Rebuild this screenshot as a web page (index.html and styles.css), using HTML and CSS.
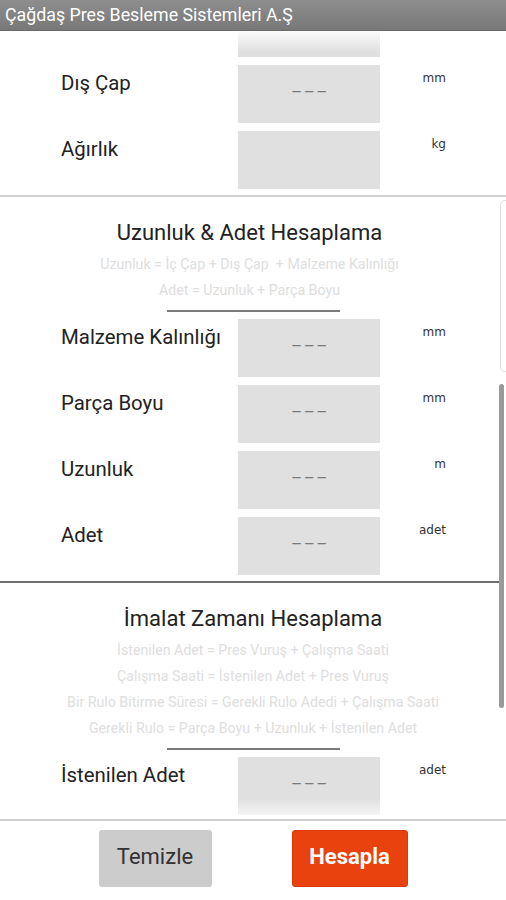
FILE: index.html
```html
<!DOCTYPE html>
<html lang="tr">
<head>
<meta charset="utf-8">
<title>Çağdaş Pres Besleme Sistemleri A.Ş</title>
<link rel="stylesheet" href="styles.css">
</head>
<body>
<div class="app">
  <header class="appbar">Çağdaş Pres Besleme Sistemleri A.Ş</header>
  <main class="scroll">
    <div class="content">
      <section class="sec sec-first">
        <div class="rows">
          <div class="row"><span class="label"></span><div class="field"></div><span class="unit"></span></div>
          <div class="row"><span class="label">Dış Çap</span><div class="field"><span class="dash">–––</span></div><span class="unit">mm</span></div>
          <div class="row"><span class="label">Ağırlık</span><div class="field"></div><span class="unit">kg</span></div>
        </div>
      </section>
      <section class="sec sec-mid">
        <h2 class="sec-title">Uzunluk &amp; Adet Hesaplama</h2>
        <div class="formulas">
          <p>Uzunluk = İç Çap + Dış Çap&nbsp; + Malzeme Kalınlığı</p>
          <p>Adet = Uzunluk + Parça Boyu</p>
        </div>
        <div class="divider"></div>
        <div class="rows">
          <div class="row"><span class="label">Malzeme Kalınlığı</span><div class="field"><span class="dash">–––</span></div><span class="unit">mm</span></div>
          <div class="row"><span class="label">Parça Boyu</span><div class="field"><span class="dash">–––</span></div><span class="unit">mm</span></div>
          <div class="row"><span class="label">Uzunluk</span><div class="field"><span class="dash">–––</span></div><span class="unit">m</span></div>
          <div class="row"><span class="label">Adet</span><div class="field"><span class="dash">–––</span></div><span class="unit">adet</span></div>
        </div>
      </section>
      <section class="sec sec-last">
        <h2 class="sec-title">İmalat Zamanı Hesaplama</h2>
        <div class="formulas">
          <p>İstenilen Adet = Pres Vuruş + Çalışma Saati</p>
          <p>Çalışma Saati = İstenilen Adet + Pres Vuruş</p>
          <p>Bir Rulo Bitirme Süresi = Gerekli Rulo Adedi + Çalışma Saati</p>
          <p>Gerekli Rulo = Parça Boyu + Uzunluk + İstenilen Adet</p>
        </div>
        <div class="divider"></div>
        <div class="rows">
          <div class="row"><span class="label">İstenilen Adet</span><div class="field"><span class="dash">–––</span></div><span class="unit">adet</span></div>
        </div>
      </section>
    </div>
    <div class="fade fade-top"></div>
    <div class="fade fade-bottom"></div>
    <div class="track"></div>
    <div class="thumb"></div>
  </main>
  <footer class="actions">
    <div class="btn btn-clear">Temizle</div>
    <div class="btn btn-calc">Hesapla</div>
  </footer>
</div>
</body>
</html>
```
FILE: styles.css
```css
* { box-sizing: border-box; }
html, body { margin: 0; padding: 0; background: #fff; }
body { font-family: Roboto, "Noto Sans", "Liberation Sans", sans-serif; color: #222; }

.app { width: 506px; height: 900px; display: flex; flex-direction: column; overflow: hidden; }

.appbar {
  height: 31px;
  flex: 0 0 31px;
  background: linear-gradient(#8e8e8e, #787878);
  border-bottom: 1px solid #6a6a6a;
  color: #fff;
  font-size: 17.8px;
  line-height: 30px;
  padding-left: 5px;
  white-space: nowrap;
}

.scroll { position: relative; flex: 1 1 auto; overflow: hidden; }
.content { margin-top: -32px; }

.sec-first { padding-bottom: 6px; border-bottom: 2px solid #d2d2d2; }
.sec-mid { padding-top: 24px; padding-bottom: 6px; border-bottom: 2px solid #6e6e6e; margin-right: 7px; }
.sec-last { padding-top: 24px; }

.sec-title {
  margin: 0;
  text-align: center;
  font-size: 22px;
  font-weight: 400;
  line-height: 24px;
  color: #222;
}
.formulas { margin-top: 6px; text-align: center; }
.formulas p {
  margin: 0;
  font-size: 14.2px;
  line-height: 26px;
  color: #dedede;
  white-space: nowrap;
}
.divider { width: 173px; height: 2px; background: #7a7a7a; margin: 7px 0 0 167px; }

.rows { display: flex; flex-direction: column; gap: 8px; margin-top: 7px; }
.sec-first .rows { margin-top: 0; }

.row {
  display: grid;
  grid-template-columns: 177px 142px 66px;
  padding-left: 61px;
  height: 58px;
}
.label { font-size: 20.4px; line-height: 24px; padding-top: 6px; color: #222; white-space: nowrap; }
.field {
  background: #e0e0e0;
  display: flex;
  align-items: center;
  justify-content: center;
  padding-bottom: 5px;
}
.dash { font-size: 17px; letter-spacing: 1.5px; color: #7a7a7a; padding-left: 2px; }
.unit {
  text-align: right;
  font-family: "DejaVu Sans", sans-serif;
  font-size: 12px;
  line-height: 14px;
  padding-top: 6px;
  color: #333;
}

.fade { position: absolute; left: 0; right: 0; height: 20px; pointer-events: none; }
.fade-top { top: 0; background: linear-gradient(rgba(255,255,255,0.92), rgba(255,255,255,0)); }
.fade-bottom { bottom: 0; background: linear-gradient(rgba(255,255,255,0), rgba(255,255,255,0.85)); }

.track {
  position: absolute;
  top: 169px;
  right: -4px;
  width: 10px;
  height: 172px;
  border: 1px solid #dedede;
  border-radius: 6px;
}
.thumb {
  position: absolute;
  top: 353px;
  right: 2px;
  width: 5px;
  height: 324px;
  background: #9a9a9a;
  border-radius: 3px;
}

.actions {
  flex: 0 0 81px;
  border-top: 2px solid #cfcfcf;
  display: flex;
  justify-content: center;
  align-items: flex-start;
  gap: 80px;
  padding-top: 9px;
}
.btn {
  height: 57px;
  border-radius: 3px;
  display: flex;
  align-items: center;
  justify-content: center;
  font-size: 22px;
  line-height: 26px;
  padding-bottom: 4px;
}
.btn-clear { width: 113px; background: #cccccc; color: #333; }
.btn-calc { width: 116px; background: #e9420e; color: #fff; font-weight: 700; border: 1px solid #d8380a; }
```
